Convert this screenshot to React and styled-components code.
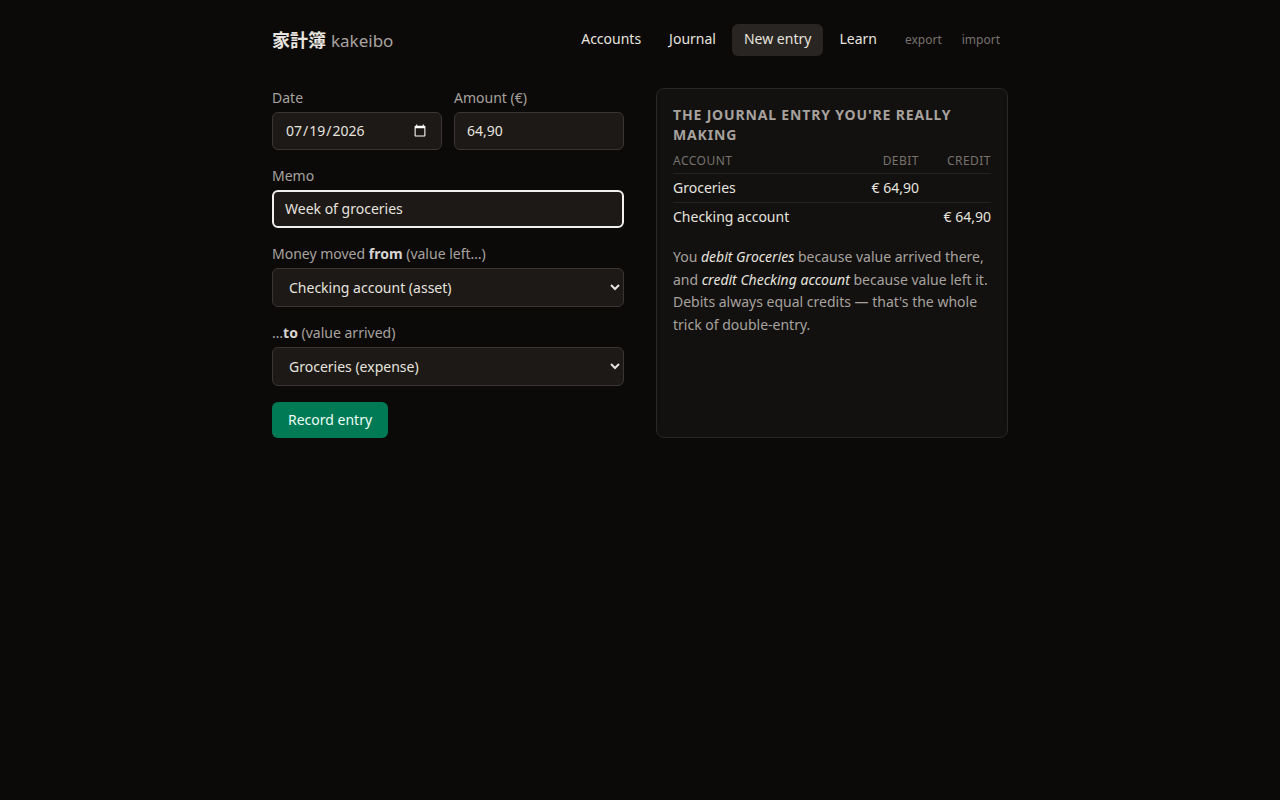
import React, { useState } from 'react';
import styled, { createGlobalStyle } from 'styled-components';

const GlobalStyle = createGlobalStyle`
  html, body {
    margin: 0;
    background: #0b0a09;
    color: #e7e3df;
    font-family: "Noto Sans", "Noto Sans CJK JP", sans-serif;
    font-size: 14px;
    color-scheme: dark;
  }
  * { box-sizing: border-box; }
`;

const Page = styled.div`
  max-width: 736px;
  margin: 0 auto;
  padding: 24px 0;
`;

const Header = styled.header`
  display: flex;
  align-items: center;
  justify-content: space-between;
  height: 32px;
  margin-bottom: 32px;
`;

const Logo = styled.div`
  font-size: 17px;
  line-height: 32px;
  display: flex;
  align-items: baseline;
  gap: 5px;
  b { color: #e7e3df; font-weight: 700; font-size: 18px; }
  span { color: #a8a29e; }
`;

const Nav = styled.nav`
  display: flex;
  align-items: center;
  gap: 4px;
`;

const NavLink = styled.a`
  padding: 5px 12px 7px;
  border-radius: 6px;
  font-size: 14px;
  color: #e7e3df;
  text-decoration: none;
  line-height: 20px;
  background: ${p => (p.$active ? '#282523' : 'transparent')};
  cursor: pointer;
`;

const Tools = styled.div`
  display: flex;
  gap: 4px;
  margin-left: 4px;
`;

const ToolLink = styled.a`
  padding: 4px 8px 6px;
  font-size: 12px;
  color: #78716c;
  cursor: pointer;
`;

const Main = styled.main`
  display: grid;
  grid-template-columns: minmax(0, 1fr) minmax(0, 1fr);
  gap: 32px;
  align-items: stretch;
`;

const Form = styled.form`
  display: flex;
  flex-direction: column;
  gap: 16px;
  min-width: 0;
`;

const Row = styled.div`
  display: grid;
  grid-template-columns: minmax(0, 1fr) minmax(0, 1fr);
  gap: 12px;
`;

const Field = styled.label`
  display: flex;
  flex-direction: column;
  gap: 4px;
  min-width: 0;
`;

const Label = styled.span`
  font-size: 14px;
  line-height: 20px;
  color: #a8a29e;
  b { color: #d6d3d1; font-weight: 700; }
`;

const Input = styled.input`
  width: 100%;
  height: 38px;
  padding: ${p => (p.$focus ? '0 11px 1px' : '0 12px 1px')};
  font: inherit;
  font-size: 14px;
  color: #e7e3df;
  background: #1c1917;
  border: ${p => (p.$focus ? '2px solid #f2f0ee' : '1px solid #3a3532')};
  border-radius: 6px;
  outline: none;
`;

const Select = styled.select`
  width: 100%;
  height: 39px;
  padding: 0 12px;
  font: inherit;
  font-size: 14px;
  color: #e7e3df;
  background: #1c1917;
  border: 1px solid #3a3532;
  border-radius: 6px;
`;

const Button = styled.button`
  align-self: flex-start;
  height: 36px;
  padding: 0 16px 1px;
  font: inherit;
  font-size: 14px;
  color: #ecfdf5;
  background: #007a55;
  border: none;
  border-radius: 6px;
  cursor: pointer;
`;

const Panel = styled.aside`
  background: #121110;
  border: 1px solid #2a2725;
  border-radius: 8px;
  padding: 16px;
`;

const PanelTitle = styled.h2`
  margin: 0 0 6px;
  font-size: 14px;
  line-height: 20px;
  font-weight: 700;
  letter-spacing: 0.06em;
  text-transform: uppercase;
  color: #a8a29e;
`;

const Table = styled.table`
  width: 100%;
  border-collapse: collapse;
  font-size: 14px;
`;

const Th = styled.th`
  font-size: 12px;
  font-weight: 400;
  letter-spacing: 0.04em;
  text-transform: uppercase;
  color: #78716c;
  padding: 1px 0 4px;
  text-align: ${p => p.$align || 'left'};
  width: ${p => p.$w || 'auto'};
`;

const Td = styled.td`
  border-top: 1px solid #26231f;
  padding: 5px 0;
  line-height: 18px;
  color: #e7e3df;
  text-align: ${p => p.$align || 'left'};
`;

const Note = styled.p`
  margin: 15px 0 0;
  font-size: 14px;
  line-height: 22.5px;
  color: #a8a29e;
  em { color: #e7e3df; }
`;

export default function App() {
  const [memo, setMemo] = useState('Week of groceries');
  const [amount, setAmount] = useState('64,90');

  return (
    <>
      <GlobalStyle />
      <Page>
        <Header>
          <Logo>
            <b>家計簿</b>
            <span>kakeibo</span>
          </Logo>
          <Nav>
            <NavLink>Accounts</NavLink>
            <NavLink>Journal</NavLink>
            <NavLink $active>New entry</NavLink>
            <NavLink>Learn</NavLink>
            <Tools>
              <ToolLink>export</ToolLink>
              <ToolLink>import</ToolLink>
            </Tools>
          </Nav>
        </Header>

        <Main>
          <Form onSubmit={e => e.preventDefault()}>
            <Row>
              <Field>
                <Label>Date</Label>
                <Input type="date" defaultValue="2026-07-19" />
              </Field>
              <Field>
                <Label>Amount (€)</Label>
                <Input value={amount} onChange={e => setAmount(e.target.value)} />
              </Field>
            </Row>
            <Field>
              <Label>Memo</Label>
              <Input $focus value={memo} onChange={e => setMemo(e.target.value)} />
            </Field>
            <Field>
              <Label>Money moved <b>from</b> (value left…)</Label>
              <Select defaultValue="checking">
                <option value="checking">Checking account (asset)</option>
                <option value="groceries">Groceries (expense)</option>
              </Select>
            </Field>
            <Field>
              <Label>…<b>to</b> (value arrived)</Label>
              <Select defaultValue="groceries">
                <option value="checking">Checking account (asset)</option>
                <option value="groceries">Groceries (expense)</option>
              </Select>
            </Field>
            <Button type="submit">Record entry</Button>
          </Form>

          <Panel>
            <PanelTitle>The journal entry you're really making</PanelTitle>
            <Table>
              <thead>
                <tr>
                  <Th>Account</Th>
                  <Th $align="right">Debit</Th>
                  <Th $align="right" $w="72px">Credit</Th>
                </tr>
              </thead>
              <tbody>
                <tr>
                  <Td>Groceries</Td>
                  <Td $align="right">€ 64,90</Td>
                  <Td />
                </tr>
                <tr>
                  <Td>Checking account</Td>
                  <Td />
                  <Td $align="right">€ 64,90</Td>
                </tr>
              </tbody>
            </Table>
            <Note>
              You <em>debit Groceries</em> because value arrived there, and{' '}
              <em>credit Checking account</em> because value left it. Debits
              always equal credits — that's the whole trick of double-entry.
            </Note>
          </Panel>
        </Main>
      </Page>
    </>
  );
}
